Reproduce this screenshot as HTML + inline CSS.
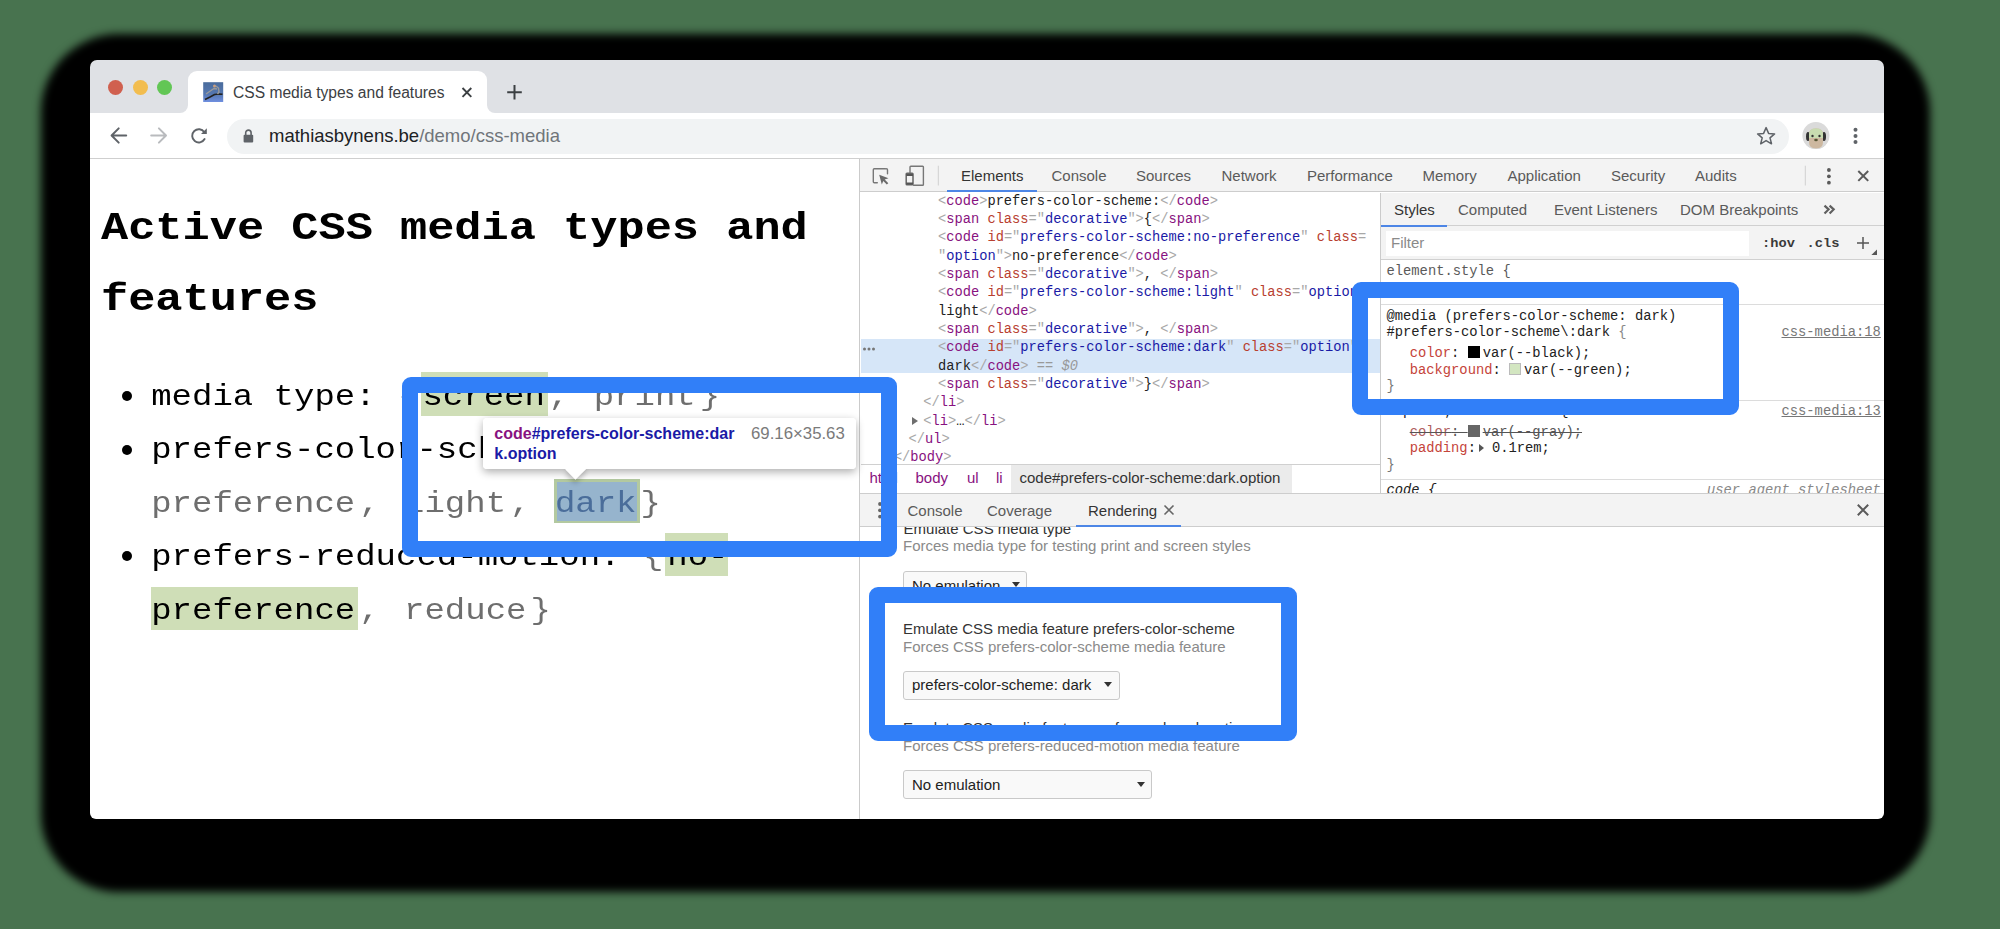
<!DOCTYPE html>
<html><head><meta charset="utf-8">
<style>
*{box-sizing:border-box;margin:0;padding:0}
html,body{width:2000px;height:929px;overflow:hidden;background:#48734f;font-family:"Liberation Sans",sans-serif;position:relative}
.a{position:absolute;white-space:pre}
.m{font-family:"Liberation Mono",monospace}
.s15{font-size:15px;line-height:15px}
#shadow{left:41px;top:34px;width:1889px;height:857.5px;background:#000;border-radius:78px;filter:blur(4px)}
#win{left:90px;top:60px;width:1794px;height:759.4px;background:linear-gradient(#dfe1e5 0,#dfe1e5 53px,#fff 53px);border-radius:7px 7px 6px 6px;overflow:hidden}
.tl{width:15px;height:15px;border-radius:50%;top:80px}
.dtab{color:#333;top:168px}
.tree{left:938px;font-size:13.72px;line-height:18.33px;color:#222}
.tg{color:#881280}.an{color:#b8402f}.av{color:#1a1aa6}.br{color:#a8a8a8}
.st{font-size:13.8px;line-height:13.8px;color:#222}
.pn{color:#c5443a}
.sw{display:inline-block;width:12px;height:12px;vertical-align:-1px;margin-right:3px;border:1px solid #999}
.pg{font-size:34px;line-height:34px;color:#000}
.gr{color:#6e6e6e}
.opt{background:#cfdeb7}
.ln{line-height:53.43px;font-size:34px;transform:scaleY(0.87);transform-origin:0 35.76px}
.hd{font-size:45.3px;line-height:45.3px;font-weight:bold;color:#000;transform:scaleY(0.86);transform-origin:0 34.7px}
.p2{padding:2px}
.blue{border:16px solid #317ff8;border-radius:9px}
.sel{border:1px solid #c9c9c9;border-radius:3px;background:#f9f9f9;height:29px}
</style></head>
<body>
<div id="shadow" class="a"></div>
<div id="win" class="a"></div>

<!-- tab strip -->
<div class="a tl" style="left:107.5px;background:#d0604f"></div>
<div class="a tl" style="left:132.5px;background:#f2bd4f"></div>
<div class="a tl" style="left:157px;background:#62c655"></div>
<div class="a" style="left:188px;top:71px;width:299px;height:43px;background:#fff;border-radius:9px 9px 0 0"></div>
<div class="a" style="left:180px;top:105px;width:8px;height:8px;background:#fff"></div>
<div class="a" style="left:180px;top:105px;width:8px;height:8px;background:#dfe1e5;border-radius:0 0 8px 0"></div>
<div class="a" style="left:487px;top:105px;width:8px;height:8px;background:#fff"></div>
<div class="a" style="left:487px;top:105px;width:8px;height:8px;background:#dfe1e5;border-radius:0 0 0 8px"></div>

<div class="a" style="left:233px;top:84.9px;font-size:15.6px;line-height:15.6px;color:#3c4043">CSS media types and features</div>

<!-- toolbar -->
<div class="a" style="left:90px;top:158px;width:1794px;height:1px;background:#cfcfcf"></div>
<div class="a" style="left:226.5px;top:118.5px;width:1562px;height:35px;background:#f1f3f4;border-radius:17.5px"></div>
<div class="a" style="left:269px;top:127.2px;font-size:18.5px;line-height:18.5px;color:#202124">mathiasbynens.be<span style="color:#70757a">/demo/css-media</span></div>
<div class="a" style="left:1803px;top:122.5px;width:26px;height:26px;border-radius:50%;background:#d8d0c0"></div>

<!-- page content -->
<div class="a m hd" style="left:101px;top:204.70px">Active CSS media types and</div>
<div class="a m hd" style="left:101px;top:275.70px">features</div>
<div class="a" style="left:421.2px;top:372px;width:126.6px;height:43.9px;background:#cfdeb7"></div>
<div class="a" style="left:665.2px;top:533.2px;width:62.8px;height:42.4px;background:#cfdeb7"></div>
<div class="a" style="left:151.2px;top:586.5px;width:206.4px;height:43.1px;background:#cfdeb7"></div>
<div class="a" style="left:554.4px;top:479.2px;width:85.5px;height:43.4px;background:#b3c9a0"></div>
<div class="a" style="left:556.9px;top:481.7px;width:80.5px;height:39px;background:#96b4cd"></div>
<div class="a m pg ln" style="left:151.2px;top:369.94px">media type: <span class="gr p2">{</span><span class="p2">screen</span><span class="gr p2">, </span><span class="gr p2">print</span><span class="gr p2">}</span></div>
<div class="a m pg ln" style="left:151.2px;top:423.34px">prefers-color-scheme: <span class="gr p2">{</span><span class="gr" style="padding-left:2px">no-</span></div>
<div class="a m pg ln" style="left:151.2px;top:476.79px"><span class="gr" style="padding-right:2px">preference</span><span class="gr p2">, </span><span class="gr p2">light</span><span class="gr p2">, </span><span class="p2" style="color:#4a6d9a">dark</span><span class="gr p2">}</span></div>
<div class="a m pg ln" style="left:151.2px;top:530.24px">prefers-reduced-motion: <span class="gr p2">{</span><span style="padding-left:2px">no-</span></div>
<div class="a m pg ln" style="left:151.2px;top:583.64px"><span style="padding-right:2px">preference</span><span class="gr p2">, </span><span class="gr p2">reduce</span><span class="gr p2">}</span></div>
<div class="a" style="left:122.4px;top:391.1px;width:10px;height:10px;border-radius:50%;background:#000"></div>
<div class="a" style="left:122.4px;top:444.5px;width:10px;height:10px;border-radius:50%;background:#000"></div>
<div class="a" style="left:122.4px;top:551.4px;width:10px;height:10px;border-radius:50%;background:#000"></div>
<!-- devtools -->
<div class="a" style="left:859px;top:159px;width:1px;height:660px;background:#cbcbcb"></div>
<div class="a" style="left:860px;top:159px;width:1024px;height:33px;background:#f3f3f3;border-bottom:1px solid #cdcdcd"></div>
<div class="a s15 dtab" style="left:961px">Elements</div>
<div class="a" style="left:946.5px;top:190px;width:90.5px;height:2px;background:#4d86e6"></div>
<div class="a s15 dtab" style="left:1051.5px;color:#5a5a5a">Console</div>
<div class="a s15 dtab" style="left:1136px;color:#5a5a5a">Sources</div>
<div class="a s15 dtab" style="left:1221.5px;color:#5a5a5a">Network</div>
<div class="a s15 dtab" style="left:1307px;color:#5a5a5a">Performance</div>
<div class="a s15 dtab" style="left:1422.5px;color:#5a5a5a">Memory</div>
<div class="a s15 dtab" style="left:1507.5px;color:#5a5a5a">Application</div>
<div class="a s15 dtab" style="left:1611px;color:#5a5a5a">Security</div>
<div class="a s15 dtab" style="left:1695px;color:#5a5a5a">Audits</div>


<!-- elements tree -->
<div class="a" style="left:861px;top:339px;width:519px;height:34px;background:#d6e6f8"></div>
<svg class="a" style="left:862px;top:346px" width="16" height="6"><circle cx="2.5" cy="3" r="1.5" fill="#777"/><circle cx="7" cy="3" r="1.5" fill="#777"/><circle cx="11.5" cy="3" r="1.5" fill="#777"/></svg>
<div class="a" style="left:861px;top:193px;width:519px;height:271px;overflow:hidden">
<div class="a m tree" style="left:77px;top:-0.3px"><span class="br">&lt;</span><span class="tg">code</span><span class="br">&gt;</span>prefers-color-scheme:<span class="br">&lt;/</span><span class="tg">code</span><span class="br">&gt;</span>
<span class="br">&lt;</span><span class="tg">span</span> <span class="an">class</span><span class="br">="</span><span class="av">decorative</span><span class="br">"&gt;</span>{<span class="br">&lt;/</span><span class="tg">span</span><span class="br">&gt;</span>
<span class="br">&lt;</span><span class="tg">code</span> <span class="an">id</span><span class="br">="</span><span class="av">prefers-color-scheme:no-preference</span><span class="br">"</span> <span class="an">class</span><span class="br">=</span>
<span class="br">"</span><span class="av">option</span><span class="br">"&gt;</span>no-preference<span class="br">&lt;/</span><span class="tg">code</span><span class="br">&gt;</span>
<span class="br">&lt;</span><span class="tg">span</span> <span class="an">class</span><span class="br">="</span><span class="av">decorative</span><span class="br">"&gt;</span>, <span class="br">&lt;/</span><span class="tg">span</span><span class="br">&gt;</span>
<span class="br">&lt;</span><span class="tg">code</span> <span class="an">id</span><span class="br">="</span><span class="av">prefers-color-scheme:light</span><span class="br">"</span> <span class="an">class</span><span class="br">="</span><span class="av">option</span><span class="br">"&gt;</span>
light<span class="br">&lt;/</span><span class="tg">code</span><span class="br">&gt;</span>
<span class="br">&lt;</span><span class="tg">span</span> <span class="an">class</span><span class="br">="</span><span class="av">decorative</span><span class="br">"&gt;</span>, <span class="br">&lt;/</span><span class="tg">span</span><span class="br">&gt;</span>
<span class="br">&lt;</span><span class="tg">code</span> <span class="an">id</span><span class="br">="</span><span class="av">prefers-color-scheme:dark</span><span class="br">"</span> <span class="an">class</span><span class="br">="</span><span class="av">option</span><span class="br">"&gt;</span>
dark<span class="br">&lt;/</span><span class="tg">code</span><span class="br">&gt;</span> <span style="color:#999">== <i>$0</i></span>
<span class="br">&lt;</span><span class="tg">span</span> <span class="an">class</span><span class="br">="</span><span class="av">decorative</span><span class="br">"&gt;</span>}<span class="br">&lt;/</span><span class="tg">span</span><span class="br">&gt;</span></div>
<div class="a m tree" style="left:62.3px;top:201.3px"><span class="br">&lt;/</span><span class="tg">li</span><span class="br">&gt;</span>
<span class="br">&lt;</span><span class="tg">li</span><span class="br">&gt;</span>…<span class="br">&lt;/</span><span class="tg">li</span><span class="br">&gt;</span></div>
<div class="a" style="left:51px;top:224px;width:0;height:0;border-top:4px solid transparent;border-bottom:4px solid transparent;border-left:6.5px solid #6e6e6e"></div>
<div class="a m tree" style="left:47.6px;top:238px"><span class="br">&lt;/</span><span class="tg">ul</span><span class="br">&gt;</span></div>
<div class="a m tree" style="left:32.9px;top:256.3px"><span class="br">&lt;/</span><span class="tg">body</span><span class="br">&gt;</span></div>
</div>
<!-- breadcrumbs -->
<div class="a" style="left:861px;top:464px;width:519px;height:1px;background:#d0d0d0"></div>
<div class="a" style="left:1011px;top:465px;width:281px;height:28px;background:#ebebeb"></div>
<div class="a s15" style="left:869.5px;top:470px;color:#881280">html</div>
<div class="a s15" style="left:915.5px;top:470px;color:#881280">body</div>
<div class="a s15" style="left:967px;top:470px;color:#881280">ul</div>
<div class="a s15" style="left:996px;top:470px;color:#881280">li</div>
<div class="a s15" style="left:1019.5px;top:470px;color:#333">code#prefers-color-scheme:dark.option</div>

<!-- sidebar -->
<div class="a" style="left:1380px;top:193px;width:1px;height:300px;background:#cbcbcb"></div>
<div class="a" style="left:1381px;top:193px;width:503px;height:33px;background:#f3f3f3;border-bottom:1px solid #d0d0d0"></div>
<div class="a" style="left:1381px;top:226px;width:503px;height:34px;background:#f3f3f3;border-bottom:1px solid #d0d0d0"></div>
<div class="a" style="left:1385.5px;top:230.5px;width:363px;height:25px;background:#fff"></div>


<div class="a s15" style="left:1394px;top:201.5px;color:#333">Styles</div>
<div class="a" style="left:1381px;top:224.5px;width:65.5px;height:2px;background:#4d86e6"></div>
<div class="a s15" style="left:1458px;top:201.5px;color:#5a5a5a">Computed</div>
<div class="a s15" style="left:1554px;top:201.5px;color:#5a5a5a">Event Listeners</div>
<div class="a s15" style="left:1680px;top:201.5px;color:#5a5a5a">DOM Breakpoints</div>
<svg class="a" style="left:1820px;top:202px" width="18" height="16"><path d="M4.5 3.6L8.6 7.4L4.5 11.6M9.6 3.6L13.7 7.4L9.6 11.6" fill="none" stroke="#5f5f5f" stroke-width="2.2"/></svg>
<div class="a s15" style="left:1391px;top:234.8px;color:#8a8a8a">Filter</div>
<div class="a m" style="left:1762px;top:237.3px;font-size:13.7px;line-height:13.7px;font-weight:bold;color:#3a3a3a">:hov</div>
<div class="a m" style="left:1806.5px;top:237.3px;font-size:13.7px;line-height:13.7px;font-weight:bold;color:#3a3a3a">.cls</div>
<svg class="a" style="left:1850px;top:230px" width="34" height="30"><path d="M13 7V19M7 13H19" stroke="#555" stroke-width="1.5"/><path d="M27 19.4V25.1H21.4Z" fill="#555"/></svg>
<div class="a m st" style="left:1386.5px;top:264.9px;color:#5a5a5a">element.style {</div>
<div class="a" style="left:1381px;top:303.5px;width:503px;height:1px;background:#dcdcdc"></div>
<div class="a m st" style="left:1386.5px;top:309.9px">@media (prefers-color-scheme: dark)</div>
<div class="a m st" style="left:1386.5px;top:325.6px">#prefers-color-scheme\:dark <span style="color:#888">{</span></div>
<div class="a m st" style="left:1781.5px;top:325.6px;color:#777;text-decoration:underline">css-media:18</div>
<div class="a m st" style="left:1409.7px;top:345.8px"><span class="pn">color</span>: <span class="sw" style="background:#000;border-color:#000"></span>var(--black);</div>
<div class="a m st" style="left:1409.7px;top:362.6px"><span class="pn">background</span>: <span class="sw" style="background:#d3e6c1;border-color:#bbb"></span>var(--green);</div>
<div class="a m st" style="left:1386.5px;top:379.8px;color:#777">}</div>
<div class="a" style="left:1381px;top:400px;width:503px;height:1px;background:#dcdcdc"></div>
<div class="a m st" style="left:1386.5px;top:405.4px">.option, .decorative {</div>
<div class="a m st" style="left:1781.5px;top:405.4px;color:#777;text-decoration:underline">css-media:13</div>
<div class="a m st" style="left:1409.7px;top:424.6px;text-decoration:line-through;color:#555"><span class="pn" style="color:#b06060">color</span>: <span class="sw" style="background:#666;border-color:#666"></span>var(--gray);</div>
<div class="a m st" style="left:1409.7px;top:442.3px"><span class="pn">padding</span>:<span style="display:inline-block;width:0;height:0;border-top:4px solid transparent;border-bottom:4px solid transparent;border-left:5.5px solid #555;margin:0 8px 0 3px;vertical-align:0px"></span>0.1rem;</div>
<div class="a m st" style="left:1386.5px;top:459.4px;color:#777">}</div>
<div class="a" style="left:1381px;top:479px;width:503px;height:1px;background:#dcdcdc"></div>
<div class="a" style="left:1381px;top:480px;width:503px;height:13px;overflow:hidden">
<div class="a m st" style="left:5.5px;top:4.4px;font-style:italic">code {</div>
<div class="a m st" style="left:326px;top:4.4px;font-style:italic;color:#888">user agent stylesheet</div>
</div>

<!-- drawer -->
<div class="a" style="left:860px;top:493px;width:1024px;height:34px;background:#f3f3f3;border-top:1px solid #cdcdcd;border-bottom:1px solid #cdcdcd"></div>


<div class="a" style="left:861px;top:527px;width:1023px;height:292px;overflow:hidden">
<div class="a s15" style="left:42.6px;top:-6.1px;color:#333">Emulate CSS media type</div>
</div>
<svg class="a" style="left:876px;top:500px" width="8" height="22"><circle cx="4" cy="4" r="1.9" fill="#666"/><circle cx="4" cy="10.3" r="1.9" fill="#666"/><circle cx="4" cy="16.6" r="1.9" fill="#666"/></svg>
<div class="a s15" style="left:907.5px;top:502.8px;color:#5a5a5a">Console</div>
<div class="a s15" style="left:987px;top:502.8px;color:#5a5a5a">Coverage</div>
<div class="a s15" style="left:1088px;top:502.8px;color:#333">Rendering</div>
<svg class="a" style="left:1163px;top:504px" width="12" height="12"><path d="M1.5 1.5L10.5 10.5M10.5 1.5L1.5 10.5" stroke="#666" stroke-width="1.6"/></svg>
<div class="a" style="left:1075.5px;top:525px;width:105px;height:2px;background:#4d86e6"></div>
<svg class="a" style="left:1856px;top:503px" width="14" height="14"><path d="M1.8 1.8L12.2 12.2M12.2 1.8L1.8 12.2" stroke="#5a5a5a" stroke-width="2"/></svg>

<div class="a s15" style="left:903px;top:538.3px;color:#8a8a8a">Forces media type for testing print and screen styles</div>
<div class="a sel" style="left:903px;top:570.5px;width:124px"></div>
<div class="a s15" style="left:912px;top:578px;color:#222">No emulation</div>
<div class="a" style="left:1012px;top:582px;width:0;height:0;border-left:4px solid transparent;border-right:4px solid transparent;border-top:5px solid #333"></div>

<div class="a s15" style="left:903px;top:621.3px;color:#333">Emulate CSS media feature prefers-color-scheme</div>
<div class="a s15" style="left:903px;top:639.3px;color:#8a8a8a">Forces CSS prefers-color-scheme media feature</div>
<div class="a sel" style="left:903px;top:670.5px;width:216.5px"></div>
<div class="a s15" style="left:912px;top:677.3px;color:#222">prefers-color-scheme: dark</div>
<div class="a" style="left:1104px;top:682px;width:0;height:0;border-left:4px solid transparent;border-right:4px solid transparent;border-top:5px solid #333"></div>

<div class="a s15" style="left:903px;top:720.3px;color:#333">Emulate CSS media feature prefers-reduced-motion</div>
<div class="a s15" style="left:903px;top:738.3px;color:#8a8a8a">Forces CSS prefers-reduced-motion media feature</div>
<div class="a sel" style="left:903px;top:770px;width:248.5px"></div>
<div class="a s15" style="left:912px;top:776.8px;color:#222">No emulation</div>
<div class="a" style="left:1136.5px;top:781.5px;width:0;height:0;border-left:4px solid transparent;border-right:4px solid transparent;border-top:5px solid #333"></div>



<!-- icons -->
<svg class="a" style="left:0;top:0" width="2000" height="929" viewBox="0 0 2000 929">
 <g fill="none" stroke-linecap="round" stroke-linejoin="round">
  <path d="M126.2 135.5H112M118.7 128.4L111.6 135.5L118.7 142.6" stroke="#5f6368" stroke-width="2"/>
  <path d="M151.2 135.5H165.6M158.9 128.4L166 135.5L158.9 142.6" stroke="#b9bbbe" stroke-width="2"/>
  <path d="M204.3 132.2A6.6 6.6 0 1 0 204.6 139" stroke="#5f6368" stroke-width="1.9"/>
  <path d="M467.2 91.5" stroke="#333"/>
  <path d="M462.5 88L471.3 96.8M471.3 88L462.5 96.8" stroke="#3c4043" stroke-width="1.9" stroke-linecap="butt"/>
  <path d="M514.5 85V99.6M507.2 92.3H521.8" stroke="#3c4043" stroke-width="2" stroke-linecap="butt"/>
  <path d="M1766.1 127.6L1768.6 133.4L1774.6 133.9L1770 137.9L1771.5 143.8L1766.1 140.6L1760.7 143.8L1762.2 137.9L1757.6 133.9L1763.6 133.4Z" stroke="#5f6368" stroke-width="1.5"/>
  <path d="M885.5 168.8H874.3Q873.3 168.8 873.3 169.8V181.8Q873.3 182.8 874.3 182.8H877.3M887.5 173.8V169.8Q887.5 168.8 886.5 168.8" stroke="#777" stroke-width="1.4"/>
  <path d="M910 172.5V167Q910 166.2 910.8 166.2H922.6Q923.4 166.2 923.4 167V184.4Q923.4 185.2 922.6 185.2H913.6" stroke="#777" stroke-width="1.4"/>
  <rect x="906.2" y="173.2" width="6.8" height="11.6" rx="0.8" stroke="#666" stroke-width="1.5"/>
  <path d="M1858.3 171L1868.2 180.9M1868.2 171L1858.3 180.9" stroke="#5a5a5a" stroke-width="2" stroke-linecap="butt"/>
 </g>
 <path d="M206.8 128.3V134.1H201Z" fill="#5f6368"/>
 <path d="M879.2 174.7L888.5 178.2L884.7 179.6L888.3 183.2L886.8 184.6L883.3 181.1L881.8 184.6Z" fill="#6a6a6a"/>
 <path d="M906.2 175H913" stroke="#555" stroke-width="2"/>
 <path d="M906.2 183.5H913" stroke="#555" stroke-width="2"/>
 <rect x="937.8" y="165.7" width="1" height="19.8" fill="#d0d0d0"/>
 <rect x="1804.8" y="165.7" width="1" height="19.8" fill="#d0d0d0"/>
 <g fill="#5f6368"><circle cx="1855.5" cy="129.8" r="2"/><circle cx="1855.5" cy="135.9" r="2"/><circle cx="1855.5" cy="142" r="2"/></g>
 <g fill="#5a5a5a"><circle cx="1828.9" cy="170" r="1.9"/><circle cx="1828.9" cy="176.3" r="1.9"/><circle cx="1828.9" cy="182.7" r="1.9"/></g>
 <g fill="#5f6368">
  <rect x="243.6" y="134.8" width="9.6" height="7.7" rx="1"/>
 </g>
 <path d="M245.7 135V132.8A2.7 2.7 0 0 1 251.1 132.8V135" fill="none" stroke="#5f6368" stroke-width="1.6"/>
 <!-- favicon -->
 <defs><linearGradient id="fg" x1="0" y1="0" x2="0" y2="1"><stop offset="0" stop-color="#4a6c9c"/><stop offset="0.6" stop-color="#5577b0"/><stop offset="1" stop-color="#6f8fe0"/></linearGradient></defs>
 <rect x="203.2" y="82.2" width="20" height="19.8" fill="url(#fg)"/>
 <path d="M205 99.5L210 97L214.5 94.5L219 94L222.5 94.3" fill="none" stroke="#222" stroke-width="1.6"/>
 <path d="M206 94L211 90.5L214 88.5L217 89M216 86L218.5 88L219 92L217.5 94" fill="none" stroke="#9a9a9a" stroke-width="1.4"/>
 <circle cx="214.5" cy="86" r="1.5" fill="#c9a080"/>
 <!-- avatar -->
 <circle cx="1815.9" cy="135.6" r="13.5" fill="#dadada"/>
 <ellipse cx="1808" cy="136.5" rx="2" ry="4.5" fill="#333"/>
 <ellipse cx="1824" cy="136.5" rx="2" ry="4.5" fill="#333"/>
 <path d="M1809 134Q1809 128.5 1816 128.5Q1823 128.5 1823 134V142Q1823 148.5 1816 148.5Q1809 148.5 1809 142Z" fill="#cdb8a0"/>
 <path d="M1809 134Q1809 128.5 1816 128.5Q1823 128.5 1823 134V138H1809Z" fill="#c8dcb0"/>
 <circle cx="1812.5" cy="136" r="1.2" fill="#333"/><circle cx="1819.5" cy="136" r="1.2" fill="#333"/>
 <ellipse cx="1816" cy="140" rx="1.8" ry="1.3" fill="#553"/>
</svg>

<!-- tooltip -->
<div class="a" style="left:483.4px;top:418px;width:372.8px;height:51px;background:#fff;border-radius:4px;box-shadow:0 3px 9px rgba(0,0,0,0.32)"></div>
<div class="a" style="left:568px;top:461px;width:16px;height:16px;background:#fff;transform:rotate(45deg) scaleX(0.9);box-shadow:3px 3px 6px rgba(0,0,0,0.22)"></div>
<div class="a" style="left:483.4px;top:418px;width:372.8px;height:51px;background:#fff;border-radius:4px"></div>
<div class="a" style="left:494.3px;top:426px;font-size:16px;line-height:16px;font-weight:bold;color:#1a1aa6"><span style="color:#881280">code</span>#prefers-color-scheme:dar</div>
<div class="a" style="left:494.3px;top:445.9px;font-size:16px;line-height:16px;font-weight:bold;color:#1a1aa6">k.option</div>
<div class="a" style="left:751px;top:425.9px;font-size:16.8px;line-height:16.8px;color:#7a7a7a">69.16×35.63</div>

<!-- blue highlight boxes -->
<div class="a blue" style="left:401.7px;top:376.9px;width:495.3px;height:180.6px"></div>
<div class="a blue" style="left:1352.4px;top:282.4px;width:387.1px;height:132.8px"></div>
<div class="a blue" style="left:868.7px;top:586.6px;width:428.7px;height:154.7px"></div>

</body></html>
